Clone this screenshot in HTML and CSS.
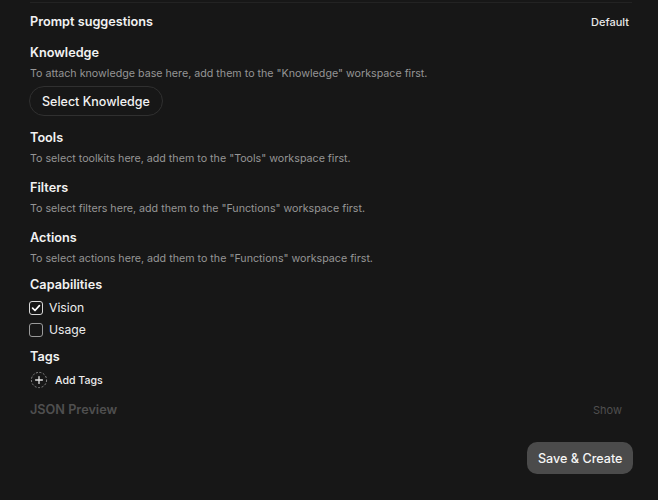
FILE: index.html
```html
<!DOCTYPE html>
<html>

<head>
    <link rel="stylesheet" href="styles.css">
</head>

<body>
    <div class="page">
        <div class="top_rule"></div>

        <div class="row_between prompt_row">
            <div class="label">Prompt suggestions</div>
            <button class="link_button">Default</button>
        </div>

        <div class="section">
            <div class="label">Knowledge</div>
            <div class="hint">To attach knowledge base here, add them to the "Knowledge" workspace first.</div>
            <button class="pill_button">Select Knowledge</button>
        </div>

        <div class="section">
            <div class="label">Tools</div>
            <div class="hint">To select toolkits here, add them to the "Tools" workspace first.</div>
        </div>

        <div class="section">
            <div class="label">Filters</div>
            <div class="hint">To select filters here, add them to the "Functions" workspace first.</div>
        </div>

        <div class="section">
            <div class="label">Actions</div>
            <div class="hint">To select actions here, add them to the "Functions" workspace first.</div>
        </div>

        <div class="section caps">
            <div class="label">Capabilities</div>
            <div class="check_list">
                <label class="check_item">
                    <span class="check_box checked">
                        <svg viewBox="0 0 14 14" width="14" height="14"><path d="M3.6 7.2 L6 9.5 L10.4 4.6" fill="none" stroke="#fff" stroke-width="1.7" stroke-linecap="round" stroke-linejoin="round"/></svg>
                    </span>
                    Vision
                </label>
                <label class="check_item">
                    <span class="check_box"></span>
                    Usage
                </label>
            </div>
        </div>

        <div class="section tags">
            <div class="label">Tags</div>
            <div class="add_tag">
                <svg viewBox="0 0 18 18" width="18" height="18">
                    <circle cx="9" cy="9" r="7.6" fill="none" stroke="#8a8a8a" stroke-width="1" stroke-dasharray="2 1.6"/>
                    <path d="M9 5.6 V12.4 M5.6 9 H12.4" stroke="#e5e5e5" stroke-width="1.3" stroke-linecap="round"/>
                </svg>
                <span>Add Tags</span>
            </div>
        </div>

        <div class="row_between json_row">
            <div class="label muted">JSON Preview</div>
            <button class="link_button muted_small">Show</button>
        </div>

        <div class="footer">
            <button class="save_button">Save &amp; Create</button>
        </div>
    </div>
</body>

</html>
```

FILE: styles.css
```css
html, body {
    margin: 0;
    background: #171717;
}

body {
    font-family: "Inter", "Noto Sans", sans-serif;
    color: #ececec;
}

.page {
    width: 602px;
    margin-left: 30px;
    padding-top: 2px;
}

.top_rule {
    height: 1px;
    background: #232323;
}

.label {
    font-size: 12.7px;
    font-weight: 600;
    line-height: 18px;
    color: #f2f2f2;
}

.row_between {
    display: flex;
    justify-content: space-between;
    align-items: center;
    padding-right: 3px;
}

.prompt_row {
    margin-top: 10px;
}

.link_button {
    background: none;
    border: none;
    padding: 0;
    font-family: inherit;
    font-size: 11px;
    font-weight: 500;
    color: #e8e8e8;
}

.section {
    margin-top: 13px;
}

.hint {
    font-size: 10.7px;
    color: #959595;
    margin-top: 5px;
    line-height: 14px;
}

.pill_button {
    display: block;
    margin-top: 5px;
    margin-bottom: 2px;
    margin-left: -1px;
    height: 30px;
    padding: 0 12px;
    border: 1px solid #303030;
    border-radius: 15px;
    background: #171717;
    color: #f2f2f2;
    font-family: inherit;
    font-size: 12.5px;
    font-weight: 500;
}

.section.caps {
    margin-top: 10px;
}

.check_list {
    display: flex;
    flex-direction: column;
    gap: 6px;
    margin-top: 6px;
}

.check_item {
    display: flex;
    align-items: center;
    gap: 6px;
    font-size: 12.2px;
    color: #ececec;
    line-height: 16px;
    margin-left: -1px;
}

.check_box {
    display: inline-flex;
    box-sizing: border-box;
    width: 14px;
    height: 14px;
    border: 1.2px solid #9a9a9a;
    border-radius: 3px;
}

.check_box.checked {
    border-color: #d8d8d8;
}

.check_box svg {
    margin: -1.2px;
}

.section.tags {
    margin-top: 10px;
}

.add_tag {
    display: flex;
    align-items: center;
    gap: 7px;
    margin-top: 5px;
    font-size: 10.6px;
    font-weight: 500;
    color: #ececec;
}

.json_row {
    margin-top: 12px;
    padding-right: 10px;
}

.label.muted {
    color: #4f4f4f;
}

.muted_small {
    color: #4f4f4f;
    font-weight: 400;
}

.footer {
    display: flex;
    justify-content: flex-end;
    margin-top: 23px;
    margin-right: -1px;
}

.save_button {
    height: 32px;
    padding: 0 10.5px;
    border: none;
    border-radius: 10px;
    background: #4b4b4b;
    color: #f5f5f5;
    font-family: inherit;
    font-size: 12.6px;
    font-weight: 500;
}
```
